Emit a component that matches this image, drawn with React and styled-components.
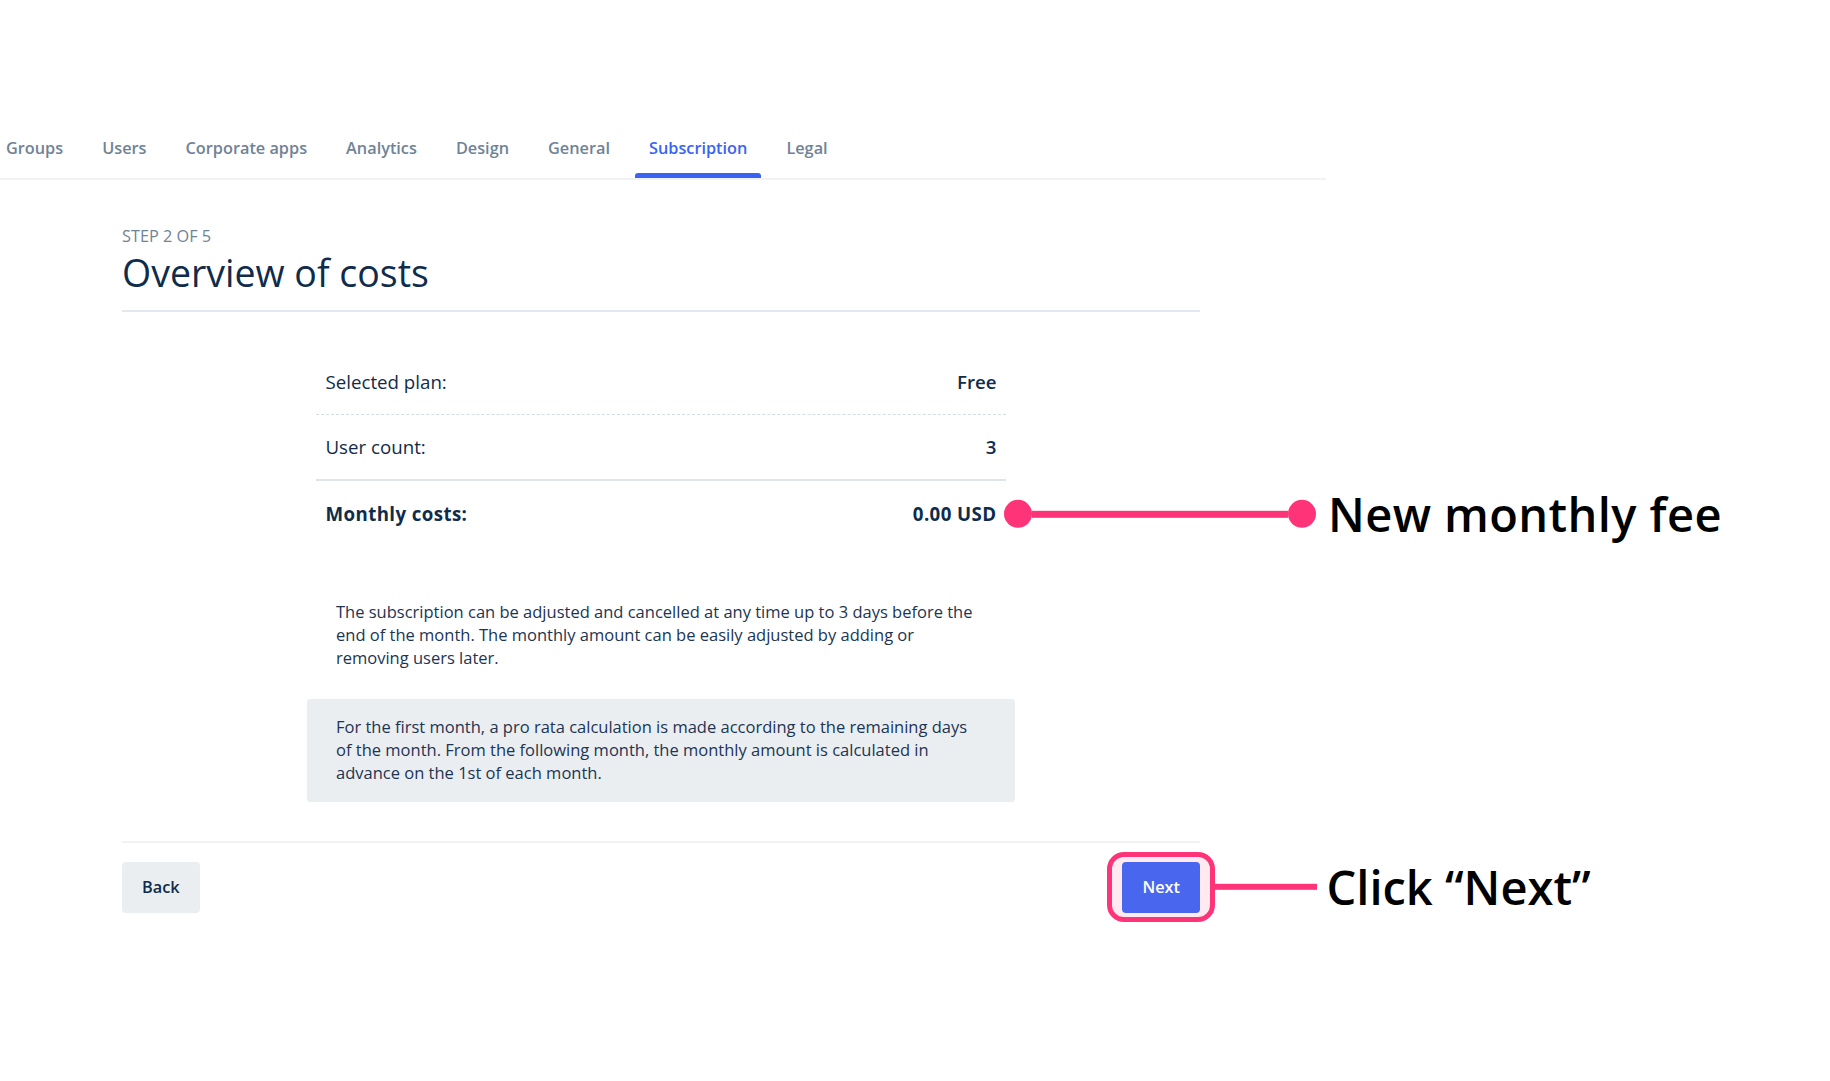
import React from 'react';
import styled, { createGlobalStyle } from 'styled-components';

const GlobalStyle = createGlobalStyle`
  html, body { margin: 0; padding: 0; background: #ffffff; }
  body { font-family: "Open Sans", "Noto Sans", sans-serif; }
  * { box-sizing: border-box; }
`;

const PINK = '#ff3478';
const NAVY = '#0f2c4c';
const MUTED = '#6f8397';

const Page = styled.div`
  width: 1830px;
  min-height: 1081px;
  padding-top: 118px;
  overflow: hidden;
`;

const TabBar = styled.nav`
  display: flex;
  gap: 11px;
  width: 1334px;
  margin-left: -8px;
  border-bottom: 2px solid #f0f2f5;
`;

const Tab = styled.div`
  position: relative;
  padding: 18px 14px;
  font-size: 16.3px;
  line-height: 24px;
  font-weight: 600;
  color: ${p => (p.$active ? '#3b63f3' : MUTED)};
  white-space: nowrap;
  &::after {
    content: '';
    position: absolute;
    left: 0;
    right: 0;
    bottom: 0;
    height: 5px;
    border-radius: 3px 3px 0 0;
    background: ${p => (p.$active ? '#3b63f3' : 'transparent')};
  }
`;

const Main = styled.main`
  width: 1078px;
  margin-left: 122px;
  padding-top: 44.5px;
`;

const Header = styled.header`
  padding-bottom: 12.5px;
  border-bottom: 2px solid #e3e8ee;
`;

const Step = styled.div`
  font-size: 16.3px;
  line-height: 22px;
  color: ${MUTED};
  text-transform: uppercase;
`;

const Title = styled.h1`
  margin: 0;
  font-size: 37.5px;
  line-height: 51px;
  font-weight: 400;
  color: ${NAVY};
`;

const CostTable = styled.div`
  width: 690px;
  margin: 38px auto 0;
  display: flex;
  flex-direction: column;
`;

const Row = styled.div`
  position: relative;
  display: flex;
  justify-content: space-between;
  align-items: center;
  height: ${p => (p.$border === 'dashed' ? '65px' : '66px')};
  padding: 0 9.5px;
  font-size: 18.7px;
  line-height: 26px;
  color: ${NAVY};
  font-weight: ${p => (p.$total ? 700 : 400)};
  letter-spacing: ${p => (p.$total ? '0.4px' : 'normal')};
  border-bottom: ${p =>
    p.$border === 'dashed'
      ? '1px dashed #d6dce2'
      : p.$border === 'solid'
      ? '2px solid #dfe4e9'
      : 'none'};
`;

const Value = styled.span`
  font-weight: ${p => (p.$bold ? 700 : 600)};
`;

const Notes = styled.div`
  width: 708px;
  margin: 37px auto 0;
  display: flex;
  flex-direction: column;
  gap: 13px;
`;

const Note = styled.p`
  margin: 0;
  padding: 17px 37px 17px 29px;
  font-size: 16.5px;
  line-height: 22.8px;
  color: #1b3553;
  background: ${p => (p.$shaded ? '#ebeef1' : 'transparent')};
  border-radius: 3px;
`;

const Footer = styled.footer`
  margin-top: 39px;
  padding-top: 19px;
  border-top: 2px solid #f0f2f4;
  display: flex;
  justify-content: space-between;
  align-items: center;
`;

const Button = styled.button`
  height: 51px;
  padding: 0 20px;
  border: none;
  border-radius: 4px;
  font-family: inherit;
  font-size: 16.3px;
  font-weight: 600;
  cursor: pointer;
  background: ${p => (p.$primary ? '#4966ee' : '#ebeef1')};
  color: ${p => (p.$primary ? '#ffffff' : NAVY)};
`;

const NextWrap = styled.div`
  position: relative;
  isolation: isolate;
  display: flex;
`;

const Highlight = styled.span`
  position: absolute;
  top: -10px;
  bottom: -9px;
  left: -15.5px;
  right: -14.5px;
  border: 5px solid ${PINK};
  border-radius: 17px;
  background: #ffeaf1;
  z-index: -1;
`;

const Callout = styled.div`
  position: absolute;
  left: ${p => p.$left};
  top: 50%;
  transform: translateY(-50%);
  display: flex;
  align-items: center;
  white-space: nowrap;
  pointer-events: none;
`;

const Dot = styled.span`
  width: 28px;
  height: 28px;
  border-radius: 50%;
  background: ${PINK};
  flex-shrink: 0;
`;

const Connector = styled.span`
  width: ${p => p.$w}px;
  height: ${p => p.$h}px;
  background: ${PINK};
  flex-shrink: 0;
`;

const CalloutText = styled.span`
  margin-left: ${p => p.$gap}px;
  font-size: 47px;
  line-height: 1.2;
  font-weight: 600;
  color: #000000;
`;

const tabs = ['Groups', 'Users', 'Corporate apps', 'Analytics', 'Design', 'General', 'Subscription', 'Legal'];

export default function App() {
  return (
    <>
      <GlobalStyle />
      <Page>
        <TabBar>
          {tabs.map(t => (
            <Tab key={t} $active={t === 'Subscription'}>
              {t}
            </Tab>
          ))}
        </TabBar>
        <Main>
          <Header>
            <Step>Step 2 of 5</Step>
            <Title>Overview of costs</Title>
          </Header>

          <CostTable>
            <Row $border="dashed">
              <span>Selected plan:</span>
              <Value>Free</Value>
            </Row>
            <Row $border="solid">
              <span>User count:</span>
              <Value>3</Value>
            </Row>
            <Row $total>
              <span>Monthly costs:</span>
              <Value $bold>0.00 USD</Value>
              <Callout $left="calc(100% - 2px)">
                <Dot />
                <Connector $w={256} $h={7} />
                <Dot />
                <CalloutText $gap={12}>New monthly fee</CalloutText>
              </Callout>
            </Row>
          </CostTable>

          <Notes>
            <Note>
              The subscription can be adjusted and cancelled at any time up to 3 days before the end of the
              month. The monthly amount can be easily adjusted by adding or removing users later.
            </Note>
            <Note $shaded>
              For the first month, a pro rata calculation is made according to the remaining days of the month.
              From the following month, the monthly amount is calculated in advance on the 1st of each month.
            </Note>
          </Notes>

          <Footer>
            <Button>Back</Button>
            <NextWrap>
              <Highlight />
              <Button $primary>Next</Button>
              <Callout $left="calc(100% + 14.5px)">
                <Connector $w={102} $h={6} />
                <CalloutText $gap={10}>Click “Next”</CalloutText>
              </Callout>
            </NextWrap>
          </Footer>
        </Main>
      </Page>
    </>
  );
}
